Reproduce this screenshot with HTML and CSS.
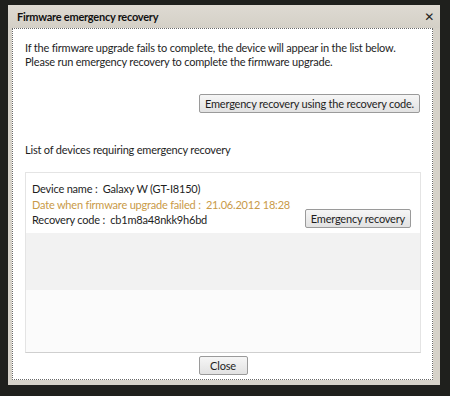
FILE: index.html
```html
<!DOCTYPE html>
<html lang="en">
<head>
    <meta charset="UTF-8">
    <title>Firmware emergency recovery</title>
    <link rel="stylesheet" href="styles.css">
</head>
<body>

<div class="window">
    <div class="title-bar">
        <span class="title">Firmware emergency recovery</span>
        <span class="close-x">&#x2715;</span>
    </div>

    <div class="content">
        <p class="intro">If the firmware upgrade fails to complete, the device will appear in the list below.<br>
        Please run emergency recovery to complete the firmware upgrade.</p>

        <div class="code-row">
            <button class="btn">Emergency recovery using the recovery code.</button>
        </div>

        <p class="list-label">List of devices requiring emergency recovery</p>

        <div class="device-list">
            <div class="device-item">
                <div class="device-info">
                    <div>Device name :&nbsp; Galaxy W (GT-I8150)</div>
                    <div class="failed">Date when firmware upgrade failed :&nbsp; 21.06.2012 18:28</div>
                    <div>Recovery code :&nbsp; cb1m8a48nkk9h6bd</div>
                </div>
                <button class="btn btn-recover">Emergency recovery</button>
            </div>
            <div class="device-empty"></div>
            <div class="device-rest"></div>
        </div>

        <div class="footer">
            <button class="btn btn-close">Close</button>
        </div>
    </div>
</div>

</body>
</html>
```

FILE: styles.css
```css
body {
    margin: 0;
    background: #1f201d;
    font-family: Lato, "Noto Sans", sans-serif;
    font-size: 11px;
    letter-spacing: -0.2px;
    line-height: 14px;
    color: #1e1e1e;
}
.window {
    width: 432px;
    height: 380px;
    margin: 5px 0 0 8px;
    background: #d6d2c9;
    display: flex;
    flex-direction: column;
}
.title-bar {
    height: 23px;
    display: flex;
    align-items: center;
    justify-content: space-between;
    padding: 0 6px 0 9px;
    background: linear-gradient(#dedad2, #d4d0c7);
}
.title {
    font-weight: bold;
    font-size: 11px;
    letter-spacing: -0.25px;
    color: #111;
}
.close-x {
    font-family: "DejaVu Sans", sans-serif;
    font-size: 12px;
    color: #222;
}
.content {
    flex: 1;
    margin: 0 7px 5px 4px;
    border: 1px dotted #6a6a6a;
    background: #fff;
    display: flex;
    flex-direction: column;
    padding: 0 11px 0 12px;
    white-space: nowrap;
}
.intro {
    margin: 12px 0 0;
}
.code-row {
    display: flex;
    justify-content: flex-end;
    margin-top: 25px;
    padding-right: 1px;
}
.btn {
    font-family: inherit;
    font-size: 11px;
    letter-spacing: -0.2px;
    color: #1e1e1e;
    height: 19px;
    padding: 0 5px;
    border: 1px solid #9a9a9a;
    border-radius: 2px;
    background: linear-gradient(#f6f6f6, #e2e2e2);
}
.list-label {
    margin: 30px 0 0;
}
.device-list {
    margin-top: 15px;
    height: 179px;
    border: 1px solid #e4e4e4;
    border-bottom: 1px solid #cfcfcf;
    display: flex;
    flex-direction: column;
}
.device-item {
    height: 60px;
    display: flex;
    justify-content: space-between;
    padding: 0 9px 0 6px;
    background: #fff;
}
.device-info {
    padding-top: 8px;
    line-height: 15.5px;
}
.failed {
    color: #c99a48;
}
.btn-recover {
    margin-top: 36px;
}
.device-empty {
    height: 57px;
    background: #f2f2f2;
}
.device-rest {
    flex: 1;
    background: #fbfbfb;
}
.footer {
    display: flex;
    justify-content: center;
    margin-top: 3px;
}
.btn-close {
    width: 49px;
    padding: 0;
}
```
